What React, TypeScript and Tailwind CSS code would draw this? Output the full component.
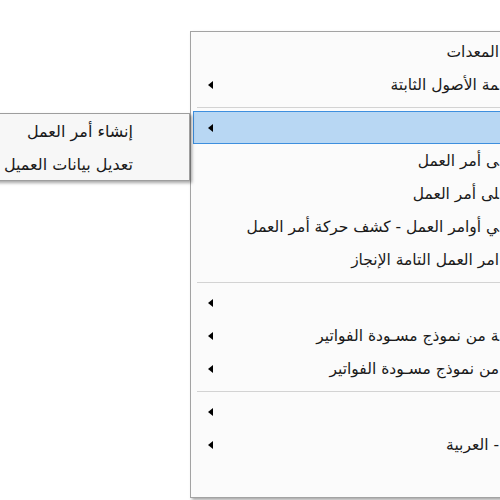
import React from "react";

const ZWJ = "\u200D";

type Item =
  | { kind: "item"; text: string; arrow?: boolean; active?: boolean }
  | { kind: "sep" };

const items: Item[] = [
  { kind: "item", text: "المعدات" },
  { kind: "item", text: ZWJ + "مة الأصول الثابتة", arrow: true },
  { kind: "sep" },
  { kind: "item", text: "", arrow: true, active: true },
  { kind: "item", text: ZWJ + "ى أمر العمل" },
  { kind: "item", text: ZWJ + "لى أمر العمل" },
  { kind: "item", text: ZWJ + "ي أوامر العمل - كشف حركة أمر العمل" },
  { kind: "item", text: "امر العمل التامة الإنجاز" },
  { kind: "sep" },
  { kind: "item", text: "", arrow: true },
  { kind: "item", text: ZWJ + "ة من نموذج مسـودة الفواتير", arrow: true },
  { kind: "item", text: "من نموذج مسـودة الفواتير", arrow: true },
  { kind: "sep" },
  { kind: "item", text: "", arrow: true },
  { kind: "item", text: "- العربية", arrow: true },
  { kind: "item", text: "" },
];

function Arrow() {
  return (
    <span className="block w-0 h-0 border-y-[4px] border-y-transparent border-r-[5px] border-r-black" />
  );
}

export default function App() {
  const font = { fontFamily: '"DejaVu Sans", "Liberation Sans", sans-serif' };
  return (
    <div className="relative w-[500px] h-[500px] overflow-hidden bg-white" style={font}>
      {/* main menu */}
      <div className="absolute left-[190px] top-[31px] w-[330px] bg-[#fbfbfb] border border-[#a3a3a3] py-[3px] pl-[2px] shadow-[2px_2px_3px_rgba(0,0,0,0.35)]">
        {items.map((it, i) =>
          it.kind === "sep" ? (
            <div key={i} className="h-[10px] pl-[4px] pt-[6px]">
              <div className="h-px bg-[#d3d3d3]" />
            </div>
          ) : (
            <div
              key={i}
              className={
                "h-[33px] flex items-center justify-between pl-[14px] pr-[19px] text-[15.5px] text-[#1a1a1a] " +
                (it.active ? "bg-[#b8d7f3] border border-[#3e8fde]" : "border border-transparent")
              }
            >
              <span className="w-[5px]">{it.arrow ? <Arrow /> : null}</span>
              <span dir="rtl" className="whitespace-nowrap leading-none pt-[3px]">
                {it.text}
              </span>
            </div>
          )
        )}
      </div>

      {/* submenu */}
      <div className="absolute left-[-60px] top-[113px] w-[250px] bg-[#f7f7f7] border border-[#9e9e9e] shadow-[2px_2px_3px_rgba(0,0,0,0.35)]">
        {["إنشاء أمر العمل", "تعديل بيانات العميل"].map((t, i) => (
          <div
            key={i}
            className="h-[33px] flex items-center justify-end pr-[56px] text-[16px] text-[#1a1a1a]"
          >
            <span dir="rtl" className="whitespace-nowrap leading-none pt-[2px]">
              {t}
            </span>
          </div>
        ))}
      </div>
    </div>
  );
}
